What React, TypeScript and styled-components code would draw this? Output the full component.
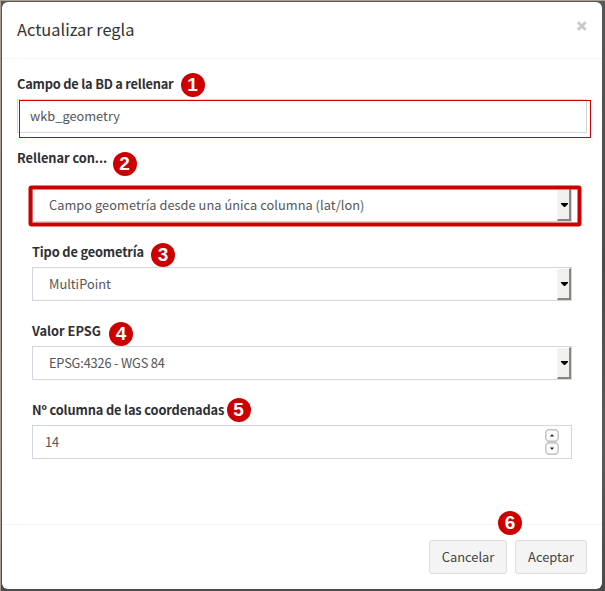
import React from 'react';
import styled, { createGlobalStyle } from 'styled-components';

const GlobalStyle = createGlobalStyle`
  * { box-sizing: border-box; }
  html, body { margin: 0; height: 100%; overflow: hidden; }
  body {
    background: #4f5050;
    color: #2f2f33;
    font-family: "Noto Sans CJK SC", "Noto Sans", sans-serif;
  }
`;

const Page = styled.div`
  position: relative;
  width: 605px;
  height: 591px;
  padding: 1px 3px 2px 1px;
  border-top: 1px solid #a79d92;
  border-left: 1px solid #a79d92;
  background: linear-gradient(#555857, #4b4c4d 45%, #5b5b5b 75%, #4b4b4b);
`;

const Modal = styled.section`
  display: flex;
  flex-direction: column;
  width: 600px;
  height: 587px;
  background: #fff;
  border-radius: 6px;
`;

const Header = styled.header`
  display: flex;
  justify-content: space-between;
  height: 57px;
  padding: 14px 15px 15px;
  border-bottom: 1px solid #f4f4f4;
`;

const Title = styled.h4`
  margin: 0;
  font-size: 16.4px;
  line-height: 26px;
  font-weight: 400;
  color: #333;
`;

const Close = styled.button`
  width: 11px;
  height: 18px;
  margin-top: 1px;
  padding: 0;
  border: 0;
  background: none;
  line-height: 0;
`;

const Body = styled.div`
  flex: 1;
  padding: 15px;
`;

const Nested = styled.div`
  padding: 15px 15px 0;
`;

const Field = styled.div<{ $gap: number }>`
  margin-bottom: ${p => p.$gap}px;
`;

const Label = styled.label<{ $track?: number }>`
  display: block;
  height: 20px;
  margin-bottom: 5px;
  font-size: 12.8px;
  line-height: 20px;
  font-weight: 700;
  letter-spacing: ${p => p.$track ?? 0}px;
  white-space: nowrap;
`;

const Control = styled.div<{ $indent: number; $track?: number }>`
  display: flex;
  align-items: center;
  justify-content: space-between;
  height: 34px;
  padding-left: ${p => p.$indent}px;
  border: 1px solid #d2d6de;
  background: #fff;
  color: #555;
  font-size: 12.8px;
  line-height: 20px;
  letter-spacing: ${p => p.$track ?? 0}px;
  white-space: nowrap;
`;

const DropButton = styled.span`
  display: flex;
  align-items: center;
  justify-content: center;
  width: 14px;
  height: 32px;
  padding-left: 2px;
  border-right: 2px solid #858585;
  border-bottom: 2px solid #858585;
  border-top: 1px solid #fff;
  border-left: 1px solid #f8f8f8;
  background: #f0f0ef;

  svg { flex: none; }
`;

const Spinner = styled.span`
  display: flex;
  flex-direction: column;
  margin-right: 12px;
`;

const Footer = styled.footer`
  display: flex;
  justify-content: flex-end;
  gap: 8px;
  height: 65px;
  padding: 15px;
  border-top: 1px solid #f4f4f4;
`;

const Button = styled.button<{ $width: number }>`
  width: ${p => p.$width}px;
  height: 34px;
  padding: 0;
  border: 1px solid #ddd;
  border-radius: 3px;
  background: #f4f4f4;
  color: #444;
  font-family: inherit;
  font-size: 12.9px;
  line-height: 20px;
`;

const Badge = styled.span<{ $x: number; $y: number }>`
  position: absolute;
  left: ${p => p.$x - 12}px;
  top: ${p => p.$y - 12}px;
  width: 24px;
  height: 24px;
  border-radius: 50%;
  background: #c00;
  color: #fff;
  font: 700 19px/24px "Liberation Sans", sans-serif;
  text-align: center;
`;

const ThinOutline = styled.div`
  position: absolute;
  left: 18px;
  top: 99px;
  width: 572px;
  height: 38px;
  border: 1px solid #c00;
`;

const ThickOutline = styled.svg`
  position: absolute;
  left: 27px;
  top: 184px;
`;

const Select = ({ value, track }: { value: string; track?: number }) => (
  <Control $indent={16} $track={track}>
    <span>{value}</span>
    <DropButton>
      <svg width="7" height="4" viewBox="0 0 7 4"><path d="M0 0h7v1L4 4H3L0 1z" fill="#000" /></svg>
    </DropButton>
  </Control>
);

const Step = ({ up }: { up?: boolean }) => (
  <svg width="14" height="13" viewBox="0 0 14 13">
    <rect x=".75" y=".75" width="12.5" height="11.5" rx="3.5" fill="#fafafa" stroke="#c2c2c2" strokeWidth="1.4" />
    <path d={up ? 'M5 7.5h4L7.5 5.5h-1z' : 'M5 5.5h4L7.5 7.5h-1z'} fill="#222" />
  </svg>
);

const badges = [
  [191.5, 83.5], [123.5, 163], [162, 254], [120, 333], [237.5, 409], [509, 522],
];

export default function App() {
  return (
    <>
      <GlobalStyle />
      <Page>
        <Modal>
          <Header>
            <Title>Actualizar regla</Title>
            <Close aria-label="Cerrar">
              <svg width="11" height="18" viewBox="0 0 11 18">
                <path d="M2 5.2l7.6 7.6M9.6 5.2L2 12.8" stroke="#c8c8c8" strokeWidth="2.8" />
              </svg>
            </Close>
          </Header>
          <Body>
            <Field $gap={15}>
              <Label $track={-0.2}>Campo de la BD a rellenar</Label>
              <Control $indent={12}>wkb_geometry</Control>
            </Field>
            <Label as="div" $track={-0.04}>Rellenar con...</Label>
            <Nested>
              <Field $gap={20}>
                <Select track={0.04} value="Campo geometría desde una única columna (lat/lon)" />
              </Field>
              <Field $gap={20}>
                <Label $track={-0.15}>Tipo de geometría</Label>
                <Select value="MultiPoint" />
              </Field>
              <Field $gap={20}>
                <Label>Valor EPSG</Label>
                <Select track={-0.17} value="EPSG:4326 - WGS 84" />
              </Field>
              <Field $gap={0}>
                <Label $track={-0.14}>Nº columna de las coordenadas</Label>
                <Control $indent={12}>
                  <span>14</span>
                  <Spinner><Step up /><Step /></Spinner>
                </Control>
              </Field>
            </Nested>
          </Body>
          <Footer>
            <Button $width={78}>Cancelar</Button>
            <Button $width={72}>Aceptar</Button>
          </Footer>
        </Modal>
        <ThinOutline />
        <ThickOutline width="556" height="44">
          <rect x="2.5" y="2.5" width="549" height="37" rx="1" fill="none" stroke="#c00" strokeWidth="4" />
        </ThickOutline>
        {badges.map(([x, y], i) => <Badge key={i} $x={x} $y={y}>{i + 1}</Badge>)}
      </Page>
    </>
  );
}
